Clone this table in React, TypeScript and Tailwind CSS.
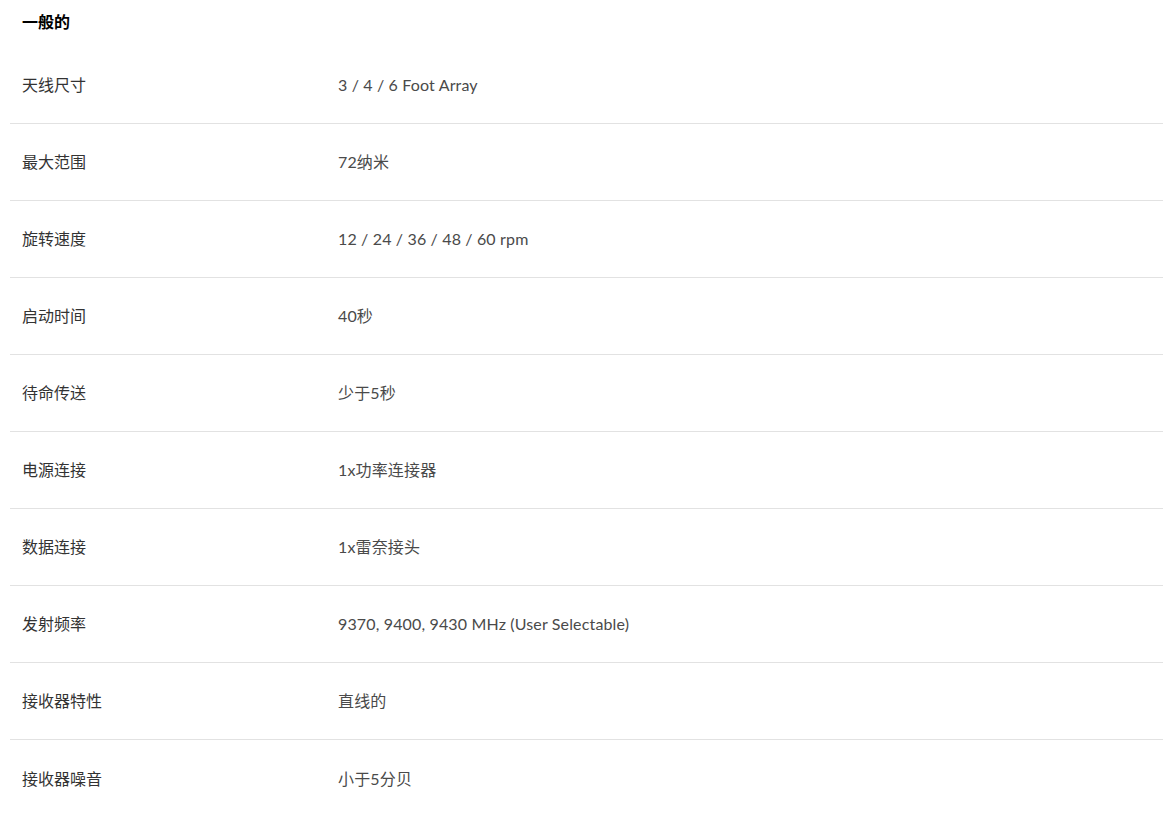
import React from "react";

const rows: [string, string][] = [
  ["天线尺寸", "3 / 4 / 6 Foot Array"],
  ["最大范围", "72纳米"],
  ["旋转速度", "12 / 24 / 36 / 48 / 60 rpm"],
  ["启动时间", "40秒"],
  ["待命传送", "少于5秒"],
  ["电源连接", "1x功率连接器"],
  ["数据连接", "1x雷奈接头"],
  ["发射频率", "9370, 9400, 9430 MHz (User Selectable)"],
  ["接收器特性", "直线的"],
  ["接收器噪音", "小于5分贝"],
];

const App = () => {
  return (
    <div className="w-full bg-white pl-[10px] font-['Lato','Noto_Sans_CJK_SC',sans-serif]">
      <h3 className="pl-3 pt-[12px] pb-[15px] text-[16px] leading-[20px] font-bold text-black">
        一般的
      </h3>
      <div>
        {rows.map(([label, value], i) => (
          <div
            key={label}
            className={`grid grid-cols-[316px_1fr] items-center h-[77px] pl-3 ${
              i < rows.length - 1 ? "border-b border-[#e2e2e2]" : ""
            }`}
          >
            <span className="text-[16px] text-[#333333]">{label}</span>
            <span className="text-[16px] tracking-[0.15px] text-[#4a4a4a]">{value}</span>
          </div>
        ))}
      </div>
    </div>
  );
};

export default App;
